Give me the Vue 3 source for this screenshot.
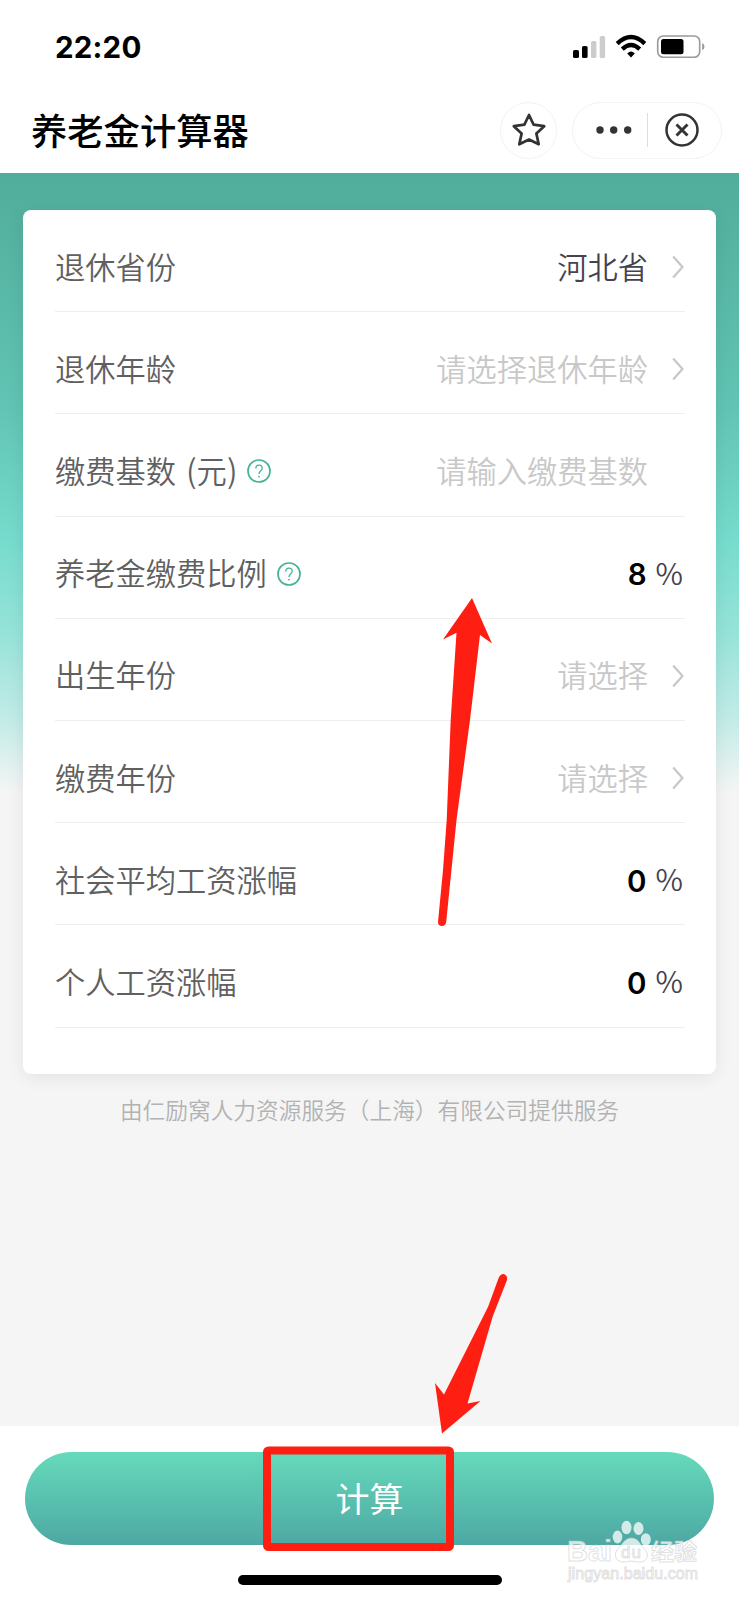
<script setup>
const rows = [
  { label: '退休省份', value: '河北省', filled: true, arrow: true },
  { label: '退休年龄', value: '请选择退休年龄', arrow: true },
  { label: '缴费基数', unit: '元', help: true, value: '请输入缴费基数' },
  { label: '养老金缴费比例', help: true, number: '8' },
  { label: '出生年份', value: '请选择', arrow: true },
  { label: '缴费年份', value: '请选择', arrow: true },
  { label: '社会平均工资涨幅', number: '0' },
  { label: '个人工资涨幅', number: '0' },
]
</script>

<template>
  <div class="page">
    <header class="top">
      <div class="status">
        <span class="time">22:20</span>
        <svg class="status-icons" width="134" height="28" viewBox="0 0 134 28">
          <rect x="1" y="16" width="6" height="8" rx="1.6" />
          <rect x="10" y="12" width="5.6" height="12" rx="1.6" />
          <rect x="19" y="7" width="5.4" height="17" rx="1.6" fill="#ccc" />
          <rect x="27.700" y="2" width="5.4" height="22" rx="1.6" fill="#ccc" />
          <g fill="none" stroke="#000" stroke-width="4.300">
            <path d="M45.200 9.600 Q59 -3.600 72.800 9.600" />
            <path d="M50.300 15.100 Q59 6.900 67.700 15.100" />
          </g>
          <path d="M55.200 19.400 Q59 15.400 62.800 19.400 L59 23.500 Z" />
          <rect x="85.700" y="2" width="42" height="21.300" rx="5.500" fill="none" stroke="#999" stroke-width="1.600" />
          <rect x="89" y="5" width="22.500" height="15.300" rx="2.500" />
          <path d="M130.200 9 Q132.500 10.300 132.500 12.600 Q132.500 15 130.200 16.200 Z" fill="#999" />
        </svg>
      </div>
      <div class="nav">
        <h1 class="title">养老金计算器</h1>
        <div class="star">
          <svg width="36" height="36" viewBox="0 0 36 36">
            <path d="M18 3 L22.600 12.700 L33.200 14.200 L25.400 21.600 L27.700 32.300 L18 27.500 L8.300 32.300 L10.600 21.600 L2.800 14.200 L13.400 12.700 Z" fill="none" stroke="#333" stroke-width="2.700" stroke-linejoin="round" />
          </svg>
        </div>
        <div class="capsule">
          <svg width="37" height="10" viewBox="0 0 37 10" fill="#333">
            <circle cx="5" cy="5" r="3.700" /><circle cx="18.700" cy="5" r="3.700" /><circle cx="32.700" cy="5" r="3.700" />
          </svg>
          <i class="split"></i>
          <svg width="36" height="36" viewBox="0 0 36 36" fill="none" stroke="#333">
            <circle cx="18" cy="18" r="15.500" stroke-width="2.500" />
            <path d="M12.500 12.500 L23.500 23.500 M23.500 12.500 L12.500 23.500" stroke-width="2.900" />
          </svg>
        </div>
      </div>
    </header>

    <main class="body">
      <section class="card">
        <div v-for="row in rows" :key="row.label" class="row">
          <span class="label">{{ row.label }}<span v-if="row.unit" class="unit"><i>(</i>{{ row.unit }}<i>)</i></span></span>
          <svg v-if="row.help" class="help" width="24" height="24" viewBox="0 0 24 24" fill="none" stroke="#46b398">
            <circle cx="12" cy="12" r="11" stroke-width="1.700" />
            <path d="M8.800 9.400 C8.800 5 15.200 5 15.200 9.200 C15.200 11.600 12 11.900 12 15" stroke-width="1.300" />
            <circle cx="12" cy="17.600" r=".9" fill="#46b398" stroke="none" />
          </svg>
          <span v-if="row.value" class="value" :class="{ filled: row.filled, lone: !row.arrow }">{{ row.value }}</span>
          <svg v-if="row.arrow" class="chevron" width="12" height="24" viewBox="0 0 12 24">
            <path d="M1.200 1.500 L10.500 12 L1.200 22.500" fill="none" stroke="#c8c8c8" stroke-width="2.300" />
          </svg>
          <template v-if="row.number">
            <span class="number">{{ row.number }}</span>
            <span class="percent">%</span>
          </template>
        </div>
      </section>
      <p class="provider">由仁励窝人力资源服务（上海）有限公司提供服务</p>
    </main>

    <footer class="bottom">
      <button class="submit">计算</button>
      <div class="home"></div>
    </footer>

    <svg class="marks" width="739" height="1600" viewBox="0 0 739 1600">
      <g fill="#ff1e12">
        <path d="M472 598 L492 643.500 L480 635 L470 720 L456.500 820 L446.200 922 Q445.500 926 442 926 Q438 926 438 922 L443 870 L446.700 820 L450.700 720 L456.500 632.700 L443 639.500 Z" />
        <path d="M442 1433.500 L435 1383 L444 1394.500 L488 1307 L499 1277 Q501 1273.500 504 1274 Q508 1276 507 1280 L492.700 1316.500 L467.500 1403.500 L480.500 1401 Z" />
      </g>
      <rect x="267" y="1450.500" width="183" height="96.500" rx="1.500" fill="none" stroke="#ff1e12" stroke-width="8" />
      <g class="brand" fill="#fff" fill-opacity=".75" stroke="#bbb" stroke-opacity=".45" stroke-width="1">
        <text x="567" y="1561" font-size="29" font-weight="700" textLength="45" lengthAdjust="spacingAndGlyphs">Bai</text>
        <g stroke="none">
          <ellipse cx="617.500" cy="1537" rx="4.800" ry="6.500" />
          <ellipse cx="626.500" cy="1527.500" rx="5" ry="6.800" />
          <ellipse cx="638.500" cy="1528.500" rx="5" ry="6.500" />
          <ellipse cx="645.800" cy="1539.500" rx="5" ry="6.200" />
        </g>
        <path d="M631.500 1538 C639 1538 641 1546 646 1551 C650 1557 645 1563 638 1562 Q631 1560 625 1562 C617 1563 613 1556 617 1550 C622 1545 624 1538 631.500 1538 Z" />
        <text x="621" y="1558" font-size="17" textLength="20">du</text>
        <text x="651" y="1559.500" font-size="23" font-weight="700" textLength="46">经验</text>
        <text x="568" y="1579" font-size="16" textLength="130">jingyan.baidu.com</text>
      </g>
    </svg>
  </div>
</template>

<style>
body { margin: 0; }
</style>

<style scoped>
.page {
  position: relative;
  width: 739px;
  height: 1600px;
  display: flex;
  flex-direction: column;
  overflow: hidden;
  background: #f5f5f5;
  font-family: "Noto Sans CJK SC", sans-serif;
}
.top { height: 173px; flex: none; background: #fff; }
.status {
  height: 94px;
  box-sizing: border-box;
  padding: 2px 33px 0 55px;
  display: flex;
  align-items: center;
  justify-content: space-between;
}
.time { padding-bottom: 2px; font: 700 29.500px/30px Inter, sans-serif; letter-spacing: .2px; }
.nav { height: 72px; display: flex; align-items: center; padding-left: 31px; }
.title { margin: 0; flex: 1; padding-bottom: 2px; font-size: 36.300px; line-height: 50px; font-weight: 500; color: #000; }
.star, .capsule {
  box-sizing: border-box;
  height: 57px;
  border: 1px solid #f3f3f3;
  border-radius: 29px;
  display: flex;
  align-items: center;
}
.star { width: 57px; justify-content: center; margin-right: 15px; }
.capsule { width: 150px; margin-right: 17px; padding-left: 22px; }
.split { width: 1px; height: 34px; background: #ddd; margin: 0 16px 0 15px; }
.body {
  flex: 1;
  padding: 37px 23px 0;
  background: linear-gradient(#52ad9b 0, #55b3a1 60px, #61c4b4 235px, #77dccd 370px, #96e3d9 460px, #c1ebe7 545px, #f5f5f5 620px);
}
.card {
  box-sizing: border-box;
  height: 864px;
  padding: 0 31px 0 32px;
  border-radius: 8px;
  background: #fff;
  box-shadow: 0 3px 18px rgba(0, 0, 0, .08);
}
.row {
  box-sizing: border-box;
  height: 102.200px;
  padding: 13px 0 0;
  border-bottom: 1px solid #eee;
  display: flex;
  align-items: center;
}
.label, .value { font-size: 30.250px; line-height: 40px; padding-bottom: 3px; font-weight: 350; white-space: nowrap; }
.label { color: #606060; }
.unit { margin-left: 10px; }
.unit i { font-style: normal; font-size: 32px; line-height: 1; }
.help { margin-left: 10px; }
.value { margin-left: auto; color: #c8c8c8; }
.value.filled { color: #444350; }
.value.lone { margin-right: 37px; }
.chevron { margin: 0 1px 0 24px; }
.number { margin-left: auto; padding-top: 1px; font: 600 29.500px/44px Inter, sans-serif; color: #000; }
.percent { margin: 0 2px 0 9px; padding-bottom: 4px; font-size: 30px; line-height: 40px; font-weight: 350; color: #444350; }
.provider { margin: 19px 0 0; text-align: center; font-size: 22.700px; line-height: 34px; font-weight: 350; color: #b2b2b2; }
.bottom { height: 174px; flex: none; background: #fff; display: flex; flex-direction: column; align-items: center; }
.submit {
  width: 689px;
  height: 93px;
  margin-top: 26px;
  padding: 0 0 2px;
  border: 0;
  border-radius: 47px;
  background: linear-gradient(#66dabb, #4da8a3);
  color: #fff;
  font: 400 34px/91px "Noto Sans CJK SC", sans-serif;
}
.home { width: 264px; height: 10px; margin-top: 30px; border-radius: 5px; background: #000; }
.marks { position: absolute; left: 0; top: 0; pointer-events: none; }
.brand text { font-family: "Liberation Sans", "Noto Sans CJK SC", sans-serif; }
</style>
